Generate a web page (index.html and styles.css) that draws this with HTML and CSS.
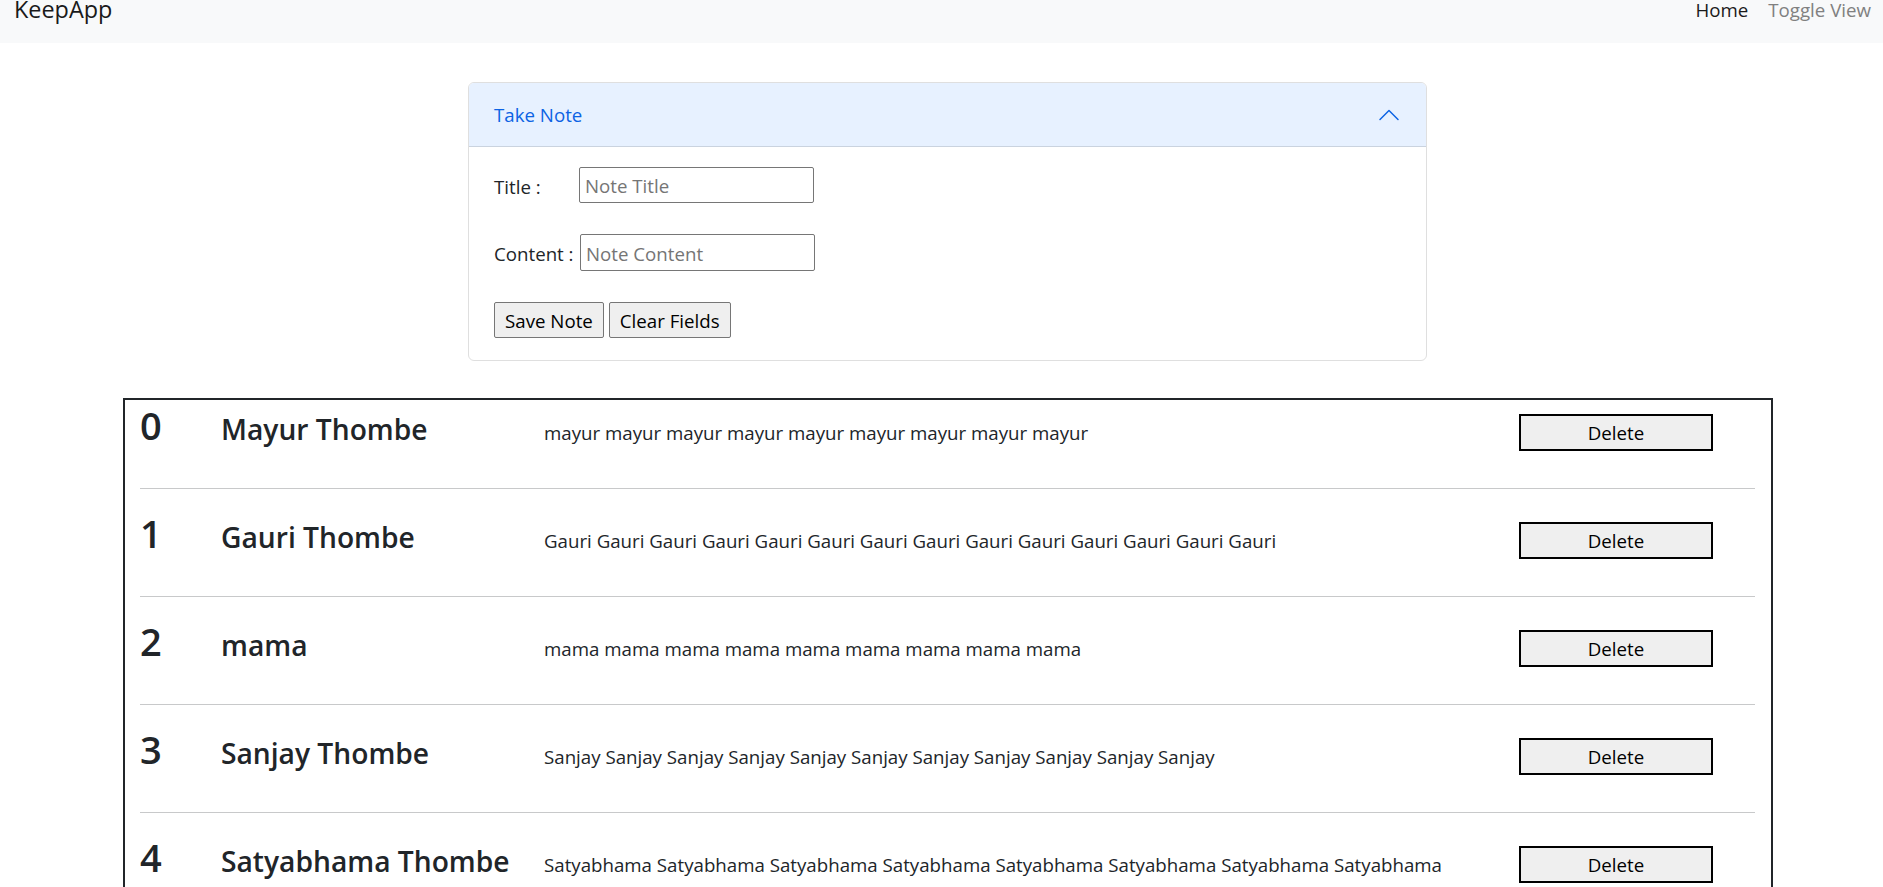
FILE: index.html
```html
<!DOCTYPE html>
<html lang="en">
<head>
<meta charset="utf-8">
<title>KeepApp</title>
<link rel="stylesheet" href="styles.css">
</head>
<body>
<nav class="navbar">
  <span class="brand">KeepApp</span>
  <div class="nav-links">
    <a class="nav-link active" href="#">Home</a>
    <a class="nav-link" href="#">Toggle View</a>
  </div>
</nav>
<main class="page">
  <section class="note-card">
    <div class="note-card-header">
      <span class="note-card-title">Take Note</span>
      <svg class="chevron" width="24" height="24" viewBox="0 0 16 16" aria-hidden="true"><path fill="#0c63e4" fill-rule="evenodd" d="M1.646 4.646a.5.5 0 0 1 .708 0L8 10.293l5.646-5.647a.5.5 0 0 1 .708.708l-6 6a.5.5 0 0 1-.708 0l-6-6a.5.5 0 0 1 0-.708z"/></svg>
    </div>
    <form class="note-form">
      <div class="field">
        <label class="field-label field-label-title" for="title">Title :</label>
        <input class="field-input" id="title" type="text" placeholder="Note Title">
      </div>
      <div class="field field-content">
        <label class="field-label field-label-content" for="content">Content :</label>
        <input class="field-input" id="content" type="text" placeholder="Note Content">
      </div>
      <div class="actions">
        <button type="button" class="btn">Save Note</button>
        <button type="button" class="btn">Clear Fields</button>
      </div>
    </form>
  </section>

  <section class="notes">
    <div class="note-row">
      <h1 class="note-index">0</h1>
      <h2 class="note-title">Mayur Thombe</h2>
      <p class="note-content">mayur mayur mayur mayur mayur mayur mayur mayur mayur</p>
      <button type="button" class="delete-btn">Delete</button>
    </div>
    <hr class="note-sep">
    <div class="note-row">
      <h1 class="note-index">1</h1>
      <h2 class="note-title">Gauri Thombe</h2>
      <p class="note-content">Gauri Gauri Gauri Gauri Gauri Gauri Gauri Gauri Gauri Gauri Gauri Gauri Gauri Gauri</p>
      <button type="button" class="delete-btn">Delete</button>
    </div>
    <hr class="note-sep">
    <div class="note-row">
      <h1 class="note-index">2</h1>
      <h2 class="note-title">mama</h2>
      <p class="note-content">mama mama mama mama mama mama mama mama mama</p>
      <button type="button" class="delete-btn">Delete</button>
    </div>
    <hr class="note-sep">
    <div class="note-row">
      <h1 class="note-index">3</h1>
      <h2 class="note-title">Sanjay Thombe</h2>
      <p class="note-content">Sanjay Sanjay Sanjay Sanjay Sanjay Sanjay Sanjay Sanjay Sanjay Sanjay Sanjay</p>
      <button type="button" class="delete-btn">Delete</button>
    </div>
    <hr class="note-sep">
    <div class="note-row">
      <h1 class="note-index">4</h1>
      <h2 class="note-title">Satyabhama Thombe</h2>
      <p class="note-content">Satyabhama Satyabhama Satyabhama Satyabhama Satyabhama Satyabhama Satyabhama Satyabhama</p>
      <button type="button" class="delete-btn">Delete</button>
    </div>
  </section>
</main>
</body>
</html>
```

FILE: styles.css
```css
* {
  box-sizing: border-box;
}

html, body {
  margin: 0;
  padding: 0;
  overflow: hidden;
}

body {
  font-family: "Open Sans", "Noto Sans", "Liberation Sans", sans-serif;
  font-size: 18.7px;
  color: #212529;
  background: #ffffff;
}

/* Navbar */
.navbar {
  height: 43px;
  background: #f8f9fa;
  display: flex;
  align-items: flex-start;
  justify-content: space-between;
  padding: 0 12px 0 14px;
}

.brand {
  font-size: 23.4px;
  line-height: 18px;
  color: #1a1a1a;
}

.nav-links {
  display: flex;
  gap: 20px;
}

.nav-link {
  font-size: 18.7px;
  line-height: 19.5px;
  text-decoration: none;
  color: #808080;
}

.nav-link.active {
  color: #1a1a1a;
}

/* Take note card */
.page {
  padding-top: 39px;
}

.note-card {
  margin-left: 468px;
  width: 959px;
  border: 1px solid #dfdfdf;
  border-radius: 6px;
  overflow: hidden;
}

.note-card-header {
  display: flex;
  align-items: center;
  justify-content: space-between;
  height: 64px;
  padding: 0 25px;
  background: #e7f1ff;
  border-bottom: 1px solid #cad3df;
}

.note-card-title {
  color: #0c63e4;
  line-height: 28px;
}

.chevron {
  display: block;
  transform: rotate(180deg);
}

.note-form {
  display: flex;
  flex-direction: column;
  gap: 31px;
  padding: 20px 25px 22px;
}

.field {
  display: flex;
  align-items: center;
  height: 36px;
}

.field-content {
  height: 37px;
}

.field-label {
  flex: none;
  line-height: 28px;
  margin-top: 3px;
}

.field-label-title {
  width: 85px;
}

.field-label-content {
  width: 86px;
}

.field-input {
  width: 235px;
  height: 100%;
  border: 1px solid #767676;
  border-radius: 2px;
  padding: 1px 5px 0;
  font-family: inherit;
  font-size: 18.7px;
  color: #212529;
  background: #ffffff;
}

.field-input::placeholder {
  color: #757575;
}

.actions {
  display: flex;
  gap: 5px;
  height: 36px;
}

.btn {
  height: 36px;
  padding: 0 10px;
  font-family: inherit;
  font-size: 18.7px;
  color: #000000;
  background: #efefef;
  border: 1px solid #767676;
  border-radius: 2px;
}

/* Notes list */
.notes {
  margin: 37px 0 0 123px;
  width: 1650px;
  border: 2px solid #212529;
  padding: 0 16px 0 15px;
}

.note-row {
  display: grid;
  grid-template-columns: 81px 323px 975px 194px;
  align-items: baseline;
  height: 72px;
  padding-top: 3px;
}

.note-index {
  margin: 0;
  font-size: 38px;
  font-weight: 600;
  line-height: 1.2;
}

.note-title {
  margin: 0;
  font-size: 28.2px;
  font-weight: 600;
  line-height: 1.2;
  white-space: nowrap;
}

.note-content {
  margin: 0;
  line-height: 1.5;
  white-space: nowrap;
}

.delete-btn {
  height: 37px;
  width: 194px;
  font-family: inherit;
  font-size: 18.7px;
  color: #000000;
  background: #efefef;
  border: 2px solid #000000;
  border-radius: 0;
  padding: 0;
}

.note-sep {
  margin: 16px 0 19px;
  border: 0;
  border-top: 1px solid #c8c9ca;
  height: 0;
}
```
